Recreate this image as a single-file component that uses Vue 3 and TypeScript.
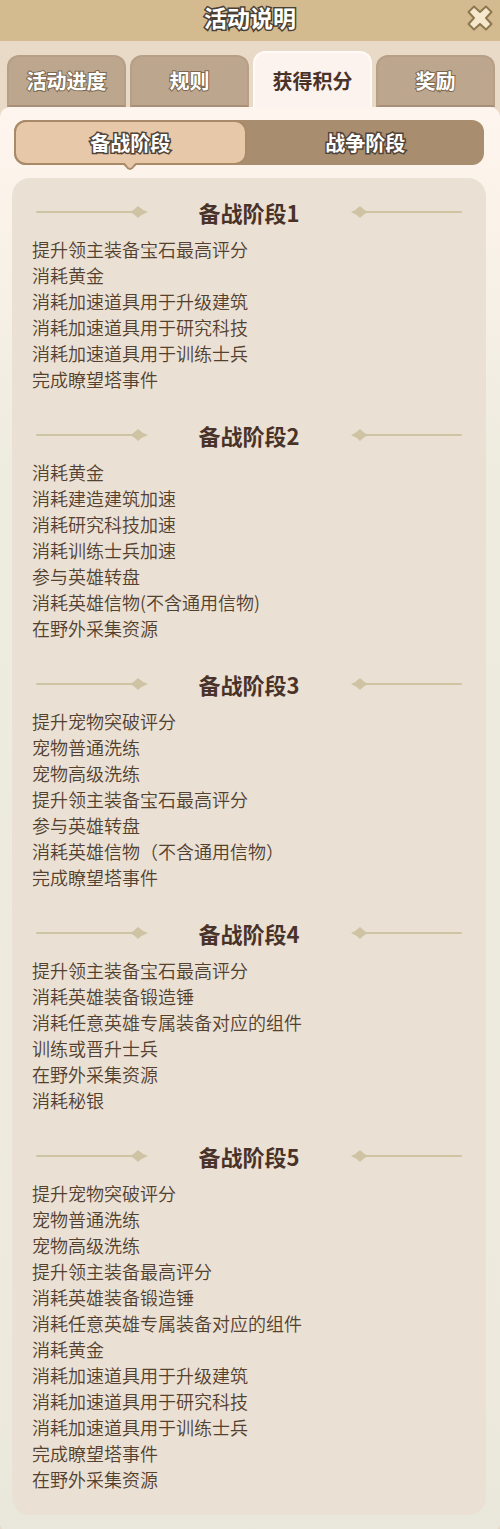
<script setup lang="ts">
import { ref } from 'vue'

interface Stage {
  title: string
  items: string[]
}

const tabs: string[] = ['活动进度', '规则', '获得积分', '奖励']
const phases: string[] = ['备战阶段', '战争阶段']
const activeTab = ref(2)
const activePhase = ref(0)

const stages: Stage[] = [
  {
    title: '备战阶段1',
    items: [
      '提升领主装备宝石最高评分',
      '消耗黄金',
      '消耗加速道具用于升级建筑',
      '消耗加速道具用于研究科技',
      '消耗加速道具用于训练士兵',
      '完成瞭望塔事件',
    ],
  },
  {
    title: '备战阶段2',
    items: [
      '消耗黄金',
      '消耗建造建筑加速',
      '消耗研究科技加速',
      '消耗训练士兵加速',
      '参与英雄转盘',
      '消耗英雄信物(不含通用信物)',
      '在野外采集资源',
    ],
  },
  {
    title: '备战阶段3',
    items: [
      '提升宠物突破评分',
      '宠物普通洗练',
      '宠物高级洗练',
      '提升领主装备宝石最高评分',
      '参与英雄转盘',
      '消耗英雄信物（不含通用信物）',
      '完成瞭望塔事件',
    ],
  },
  {
    title: '备战阶段4',
    items: [
      '提升领主装备宝石最高评分',
      '消耗英雄装备锻造锤',
      '消耗任意英雄专属装备对应的组件',
      '训练或晋升士兵',
      '在野外采集资源',
      '消耗秘银',
    ],
  },
  {
    title: '备战阶段5',
    items: [
      '提升宠物突破评分',
      '宠物普通洗练',
      '宠物高级洗练',
      '提升领主装备最高评分',
      '消耗英雄装备锻造锤',
      '消耗任意英雄专属装备对应的组件',
      '消耗黄金',
      '消耗加速道具用于升级建筑',
      '消耗加速道具用于研究科技',
      '消耗加速道具用于训练士兵',
      '完成瞭望塔事件',
      '在野外采集资源',
    ],
  },
]
</script>

<template>
  <div class="dialog">
    <header class="titlebar">
      <h1>活动说明</h1>
      <button class="close" type="button" aria-label="关闭">
        <svg viewBox="0 0 28 28" width="28" height="28" aria-hidden="true">
          <path
            d="M8 2.5L14 8L20 2.5L25.500 8L20 14L25.500 20L20 25.500L14 20L8 25.500L2.500 20L8 14L2.500 8Z"
            fill="#f6e8cc"
            stroke="#8d7850"
            stroke-width="2"
            stroke-linejoin="round"
          />
        </svg>
      </button>
    </header>

    <nav class="tabs">
      <button
        v-for="(tab, i) in tabs"
        :key="tab"
        type="button"
        class="tab"
        :class="{ active: i === activeTab }"
        @click="activeTab = i"
      >{{ tab }}</button>
    </nav>

    <main class="sheet">
      <div class="phases">
        <button
          v-for="(phase, i) in phases"
          :key="phase"
          type="button"
          class="phase"
          :class="{ active: i === activePhase }"
          @click="activePhase = i"
        >
          {{ phase }}
          <svg v-if="i === activePhase" class="pointer" viewBox="0 0 18 9" width="18" height="9" aria-hidden="true">
            <path d="M0 -1H18V0Q15 0 13 3Q11 6 9 6Q7 6 5 3Q3 0 0 0Z" fill="#e7c8a8" />
            <path d="M0 0Q3 0 5 3Q7 6 9 6Q11 6 13 3Q15 0 18 0" fill="none" stroke="#a98a68" stroke-width="2" />
          </svg>
        </button>
      </div>

      <div class="panel">
        <section v-for="stage in stages" :key="stage.title" class="stage">
          <div class="heading">
            <svg class="rule" viewBox="0 0 112 14" width="112" height="14" aria-hidden="true">
              <path d="M1 7H98" stroke="#cec4a4" stroke-width="2" stroke-linecap="round" />
              <path d="M94 7Q98 5 102 1Q106 5 112 7Q106 9 102 13Q98 9 94 7Z" fill="#cec4a4" />
            </svg>
            <h2>{{ stage.title }}</h2>
            <svg class="rule" viewBox="0 0 112 14" width="112" height="14" aria-hidden="true">
              <path d="M14 7H111" stroke="#cec4a4" stroke-width="2" stroke-linecap="round" />
              <path d="M18 7Q14 5 10 1Q6 5 1 7Q6 9 10 13Q14 9 18 7Z" fill="#cec4a4" />
            </svg>
          </div>
          <ul>
            <li v-for="item in stage.items" :key="item">{{ item }}</li>
          </ul>
        </section>
      </div>
    </main>
  </div>
</template>

<style>
body {
  margin: 0;
  background: #e9dac8;
}
</style>

<style scoped>
.dialog {
  font-family: "Noto Sans CJK SC", sans-serif;
  color: #54402f;
  background: #e9dac8;
}

.titlebar {
  position: relative;
  display: flex;
  align-items: center;
  justify-content: center;
  height: 41px;
  padding-bottom: 8px;
  box-sizing: border-box;
  background: #d4ba8f;
}

h1,
h2 {
  margin: 0;
  font-weight: 700;
}

h1 {
  font-size: 23px;
  line-height: 32px;
  color: #fff;
  -webkit-text-stroke: 3px #4a4034;
  paint-order: stroke fill;
}

button {
  margin: 0;
  padding: 0;
  border: 0;
  font-family: inherit;
  cursor: pointer;
}

.close {
  position: absolute;
  right: 6px;
  top: 4px;
  width: 28px;
  height: 28px;
  background: none;
}

.close svg {
  display: block;
}

.tabs {
  display: flex;
  align-items: flex-end;
  gap: 4px;
  height: 66px;
  padding: 0 5px 0 7px;
}

.tab {
  flex: 1;
  height: 52px;
  border: 2px solid #b69f86;
  border-bottom-color: #a98e78;
  border-radius: 12px 12px 0 0;
  box-sizing: border-box;
  background: #bca68e;
  font-size: 20px;
  font-weight: 700;
  line-height: 48px;
  color: #fff;
  -webkit-text-stroke: 2px #7c684f;
  paint-order: stroke fill;
}

.tab.active {
  height: 56px;
  padding-top: 2px;
  border-color: #fffaf6;
  border-bottom: 0;
  background: #fcf2ee;
  color: #493329;
  -webkit-text-stroke: 0;
}

.sheet {
  padding: 13px 14px 15px 12px;
  border-radius: 10px 10px 6px 6px;
  background: linear-gradient(#fef6ee 0, #fbf3ea 100px, #eeebdf 360px, #edeadd 1300px, #e9e6db 100%);
}

.phases {
  display: flex;
  height: 45px;
  margin: 0 2px 13px;
  border-radius: 12px;
  background: #a98d6f;
}

.phase {
  position: relative;
  flex: 1;
  box-sizing: border-box;
  border-radius: 12px;
  background: none;
  font-size: 20px;
  font-weight: 700;
  line-height: 40px;
  color: #fff;
  -webkit-text-stroke: 3px #51443a;
  paint-order: stroke fill;
}

.phase.active {
  flex: 0 0 49.5%;
  border: 2px solid #a98a68;
  background: #e7c8a8;
}

.pointer {
  position: absolute;
  left: calc(50% - 9px);
  top: 100%;
}

.panel {
  display: flex;
  flex-direction: column;
  gap: 27px;
  padding: 18px 20px 23px;
  border-radius: 18px;
  background: #eae0d4;
}

.heading {
  display: flex;
  align-items: center;
  justify-content: space-between;
  height: 32px;
  margin-bottom: 8px;
  padding: 0 4px;
}

h2 {
  color: #493329;
  font-size: 22px;
  line-height: 32px;
}

ul {
  margin: 0;
  padding: 0;
  list-style: none;
}

li {
  font-size: 18px;
  font-weight: 350;
  line-height: 26px;
}
</style>
